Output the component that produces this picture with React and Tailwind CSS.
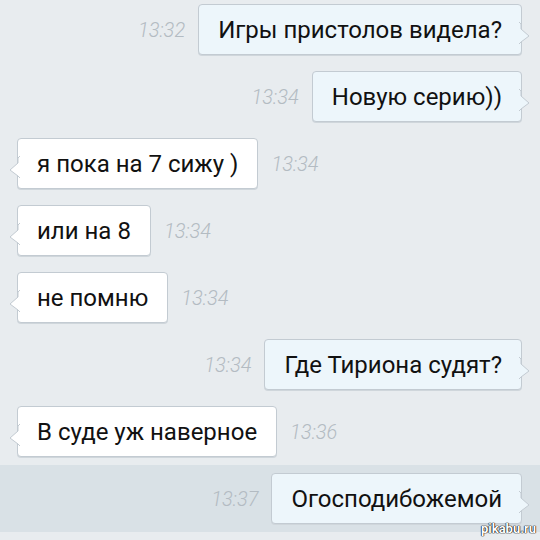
import React from "react";

const messages = [
  { out: true, text: "Игры пристолов видела?", time: "13:32" },
  { out: true, text: "Новую серию))", time: "13:34" },
  { out: false, text: "я пока на 7 сижу )", time: "13:34" },
  { out: false, text: "или на 8", time: "13:34" },
  { out: false, text: "не помню", time: "13:34" },
  { out: true, text: "Где Тириона судят?", time: "13:34" },
  { out: false, text: "В суде уж наверное", time: "13:36" },
  { out: true, text: "Огосподибожемой", time: "13:37", hl: true },
];

function Tail({ out }) {
  return (
    <svg
      width="12"
      height="22"
      viewBox="0 0 12 22"
      className={"absolute top-[17px] " + (out ? "right-[-10px]" : "left-[-10px]")}
    >
      {out ? (
        <path d="M0 0 L2 2 L2 7 L10 14 L2 20 L0 22" fill="#edf6fb" stroke="#c3cbd2" strokeWidth="1" />
      ) : (
        <path d="M12 0 L10 2 L10 7 L2 14 L10 20 L12 22" fill="#ffffff" stroke="#c3cbd2" strokeWidth="1" />
      )}
    </svg>
  );
}

function Row({ m }) {
  const bubble = (
    <div
      className={
        "relative flex h-[51px] items-center rounded-[4px] border border-[#c3cbd2] px-[19px] text-[24px] text-[#111] shadow-[0_1px_0_#cfd6db] " +
        (m.out ? "bg-[#edf6fb]" : "bg-white")
      }
    >
      {m.text}
      <Tail out={m.out} />
    </div>
  );
  const time = (
    <span className="text-[20px] font-light italic text-[#b3bbc2]">{m.time}</span>
  );
  return (
    <div
      className={
        "flex items-center gap-[13px] py-2 " +
        (m.out ? "justify-end pr-[18px]" : "justify-start pl-[17px]") +
        (m.hl ? " bg-[#d9e1e6]" : "")
      }
    >
      {m.out ? (
        <>
          {time}
          {bubble}
        </>
      ) : (
        <>
          {bubble}
          {time}
        </>
      )}
    </div>
  );
}

export default function App() {
  return (
    <div className="relative h-[540px] w-[540px] overflow-hidden bg-[#e8ecef] font-['Roboto',sans-serif]">
      <div className="mt-[-4px] flex flex-col">
        {messages.map((m, i) => (
          <Row key={i} m={m} />
        ))}
      </div>
      <span className="absolute bottom-[2px] right-[4px] text-[13px] font-bold text-white [text-shadow:0_0_1px_#000,0_0_1px_#000,0_0_1px_#000]">
        pikabu.ru
      </span>
    </div>
  );
}
